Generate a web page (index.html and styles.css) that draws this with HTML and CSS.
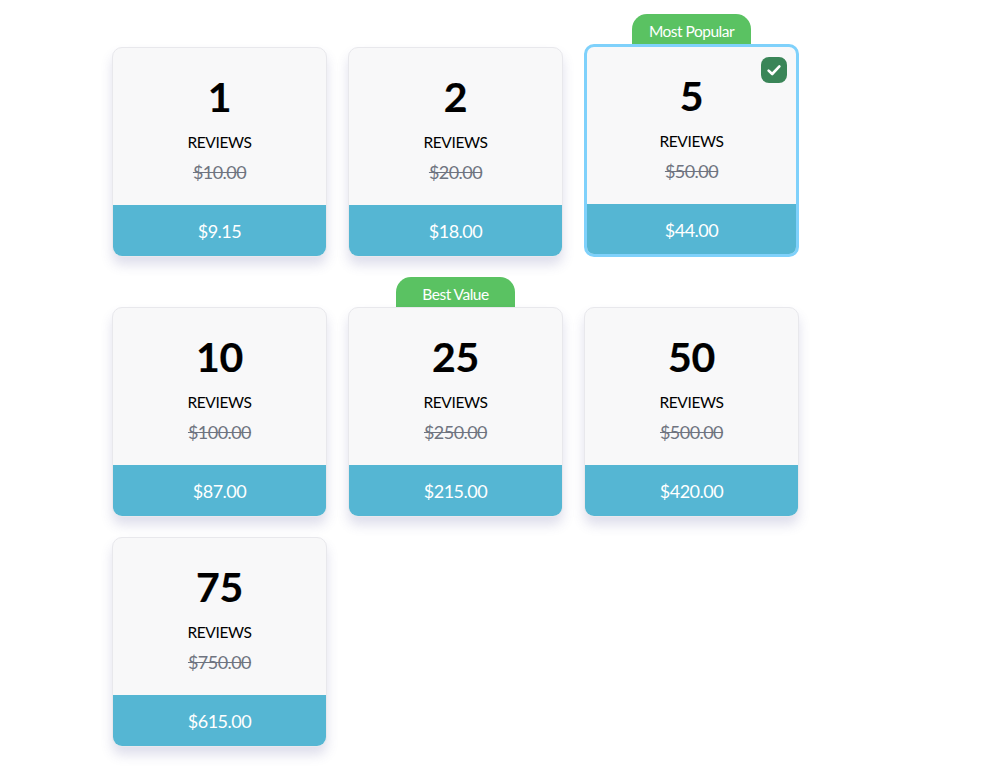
FILE: index.html
```html
<!DOCTYPE html>
<html lang="en">
<head>
<meta charset="utf-8">
<title>Review packages</title>
<link rel="stylesheet" href="styles.css">
</head>
<body>
<main class="plans">
  <div class="plan">
    <div class="card">
      <div class="card-body"><div class="count">1</div><div class="label">REVIEWS</div><s class="old">$10.00</s></div>
      <div class="price">$9.15</div>
    </div>
  </div>
  <div class="plan">
    <div class="card">
      <div class="card-body"><div class="count">2</div><div class="label">REVIEWS</div><s class="old">$20.00</s></div>
      <div class="price">$18.00</div>
    </div>
  </div>
  <div class="plan">
    <div class="badge">Most Popular</div>
    <div class="card selected">
      <span class="check"><svg viewBox="0 0 16 16" width="16" height="16"><path d="M2.6 8.6 6.2 12 13.4 4.4" fill="none" stroke="#fff" stroke-width="2.6" stroke-linecap="round" stroke-linejoin="round"/></svg></span>
      <div class="card-body"><div class="count">5</div><div class="label">REVIEWS</div><s class="old">$50.00</s></div>
      <div class="price">$44.00</div>
    </div>
  </div>
  <div class="plan">
    <div class="card">
      <div class="card-body"><div class="count">10</div><div class="label">REVIEWS</div><s class="old">$100.00</s></div>
      <div class="price">$87.00</div>
    </div>
  </div>
  <div class="plan">
    <div class="badge">Best Value</div>
    <div class="card">
      <div class="card-body"><div class="count">25</div><div class="label">REVIEWS</div><s class="old">$250.00</s></div>
      <div class="price">$215.00</div>
    </div>
  </div>
  <div class="plan">
    <div class="card">
      <div class="card-body"><div class="count">50</div><div class="label">REVIEWS</div><s class="old">$500.00</s></div>
      <div class="price">$420.00</div>
    </div>
  </div>
  <div class="plan">
    <div class="card">
      <div class="card-body"><div class="count">75</div><div class="label">REVIEWS</div><s class="old">$750.00</s></div>
      <div class="price">$615.00</div>
    </div>
  </div>
</main>
</body>
</html>
```

FILE: styles.css
```css
* { box-sizing: border-box; }
html, body { margin: 0; background: #fff; }
body { font-family: Lato, "Open Sans", sans-serif; color: #000; padding: 14px 0 0 112px; height: 774px; overflow: hidden; }
.plans { display: grid; grid-template-columns: repeat(3, 215px); column-gap: 21px; row-gap: 20px; align-items: end; width: 687px; }
.plan { display: flex; flex-direction: column; align-items: center; }
.badge { width: 119px; height: 30px; background: #5ac262; color: #fff; font-size: 15.5px; letter-spacing: -.5px; line-height: 35px; text-align: center; border-radius: 15px 15px 0 0; }
.card { position: relative; width: 215px; height: 210px; display: flex; flex-direction: column; background: #f8f8f9; border: 1px solid #e8e8ec; border-radius: 10px; overflow: hidden; box-shadow: 0 8px 12px rgba(80, 80, 150, .18); }
.card.selected { height: 213px; border: 3px solid #7fd1fb; box-shadow: none; }
.card-body { height: 157px; display: flex; flex-direction: column; align-items: center; flex: none; }
.count { font-size: 41px; font-weight: 700; letter-spacing: -.4px; line-height: 50px; margin-top: 24px; -webkit-text-stroke: .2px #000; }
.label { font-size: 15.5px; letter-spacing: -.4px; line-height: 20px; margin-top: 10px; }
.old { font-size: 18px; letter-spacing: -.55px; line-height: 22px; margin-top: 9px; color: #6f7480; }
.price { flex: 1; display: flex; align-items: center; justify-content: center; background: #55b6d3; color: #fff; font-size: 18px; letter-spacing: -.5px; }
.selected .price { padding-top: 2px; }
.check { position: absolute; top: 10px; right: 9px; width: 26px; height: 26px; border-radius: 8px; background: #3a8558; display: flex; align-items: center; justify-content: center; }
```
